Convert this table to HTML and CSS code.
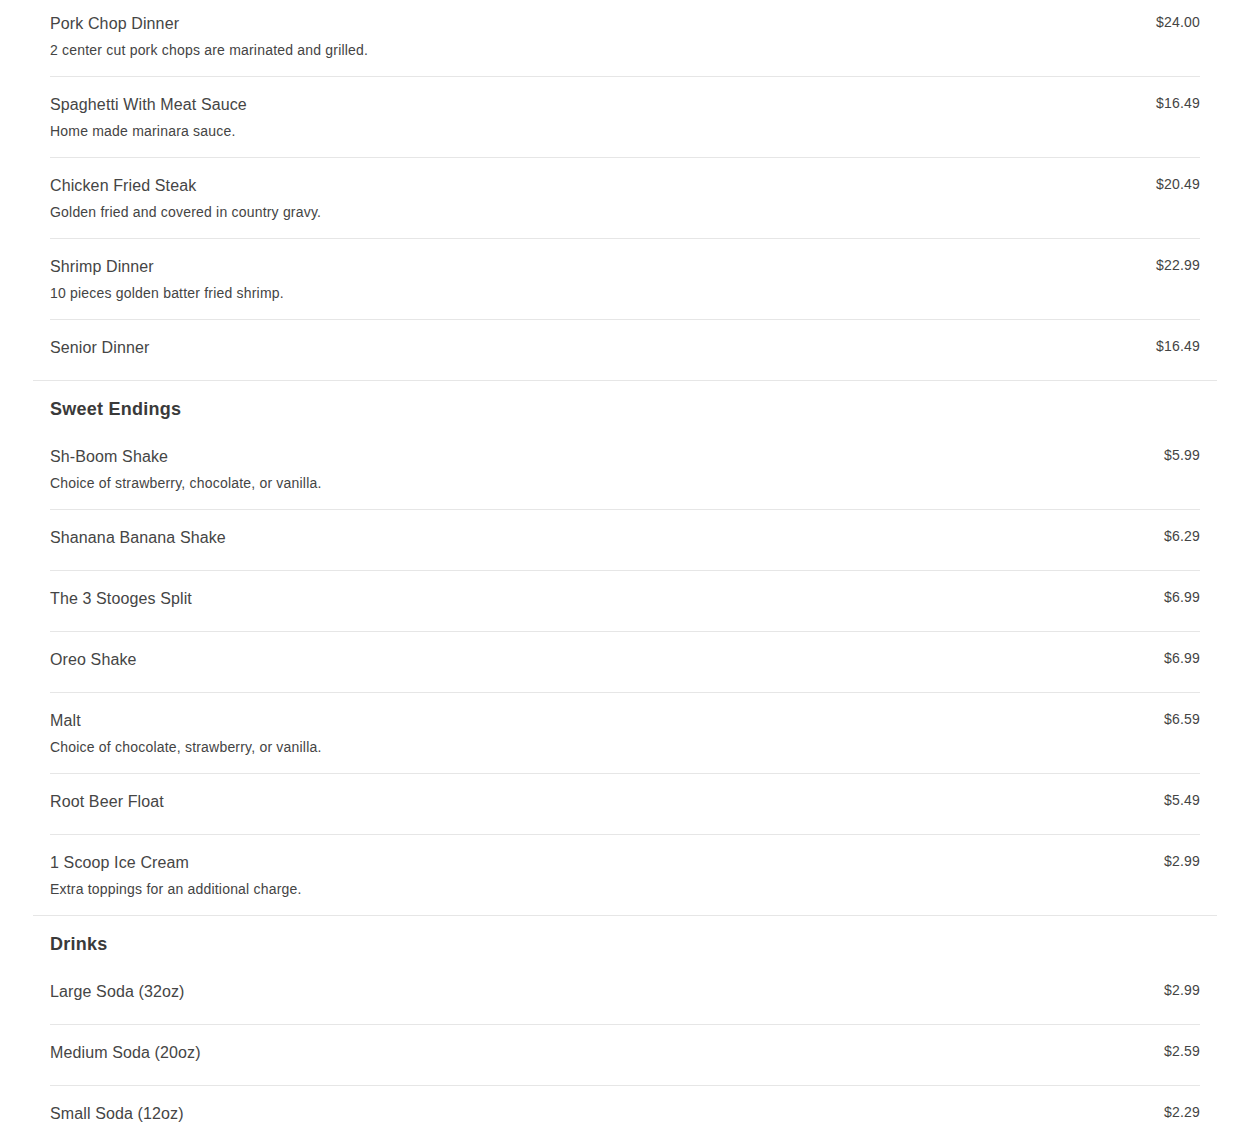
FILE: index.html
```html
<!DOCTYPE html>
<html>
<head>
<meta charset="utf-8">
<link rel="stylesheet" href="styles.css">
</head>
<body>
<div class="menu">
  <section class="section section--first">
    <div class="item">
      <div class="info"><div class="name">Pork Chop Dinner</div><div class="desc">2 center cut pork chops are marinated and grilled.</div></div>
      <div class="price">$24.00</div>
    </div>
    <div class="item">
      <div class="info"><div class="name">Spaghetti With Meat Sauce</div><div class="desc">Home made marinara sauce.</div></div>
      <div class="price">$16.49</div>
    </div>
    <div class="item">
      <div class="info"><div class="name">Chicken Fried Steak</div><div class="desc">Golden fried and covered in country gravy.</div></div>
      <div class="price">$20.49</div>
    </div>
    <div class="item">
      <div class="info"><div class="name">Shrimp Dinner</div><div class="desc">10 pieces golden batter fried shrimp.</div></div>
      <div class="price">$22.99</div>
    </div>
    <div class="item item--plain">
      <div class="info"><div class="name">Senior Dinner</div></div>
      <div class="price">$16.49</div>
    </div>
  </section>
  <section class="section">
    <h2 class="heading">Sweet Endings</h2>
    <div class="item">
      <div class="info"><div class="name">Sh-Boom Shake</div><div class="desc">Choice of strawberry, chocolate, or vanilla.</div></div>
      <div class="price">$5.99</div>
    </div>
    <div class="item item--plain">
      <div class="info"><div class="name">Shanana Banana Shake</div></div>
      <div class="price">$6.29</div>
    </div>
    <div class="item item--plain">
      <div class="info"><div class="name">The 3 Stooges Split</div></div>
      <div class="price">$6.99</div>
    </div>
    <div class="item item--plain">
      <div class="info"><div class="name">Oreo Shake</div></div>
      <div class="price">$6.99</div>
    </div>
    <div class="item">
      <div class="info"><div class="name">Malt</div><div class="desc">Choice of chocolate, strawberry, or vanilla.</div></div>
      <div class="price">$6.59</div>
    </div>
    <div class="item item--plain">
      <div class="info"><div class="name">Root Beer Float</div></div>
      <div class="price">$5.49</div>
    </div>
    <div class="item">
      <div class="info"><div class="name">1 Scoop Ice Cream</div><div class="desc">Extra toppings for an additional charge.</div></div>
      <div class="price">$2.99</div>
    </div>
  </section>
  <section class="section">
    <h2 class="heading">Drinks</h2>
    <div class="item item--plain">
      <div class="info"><div class="name">Large Soda (32oz)</div></div>
      <div class="price">$2.99</div>
    </div>
    <div class="item item--plain">
      <div class="info"><div class="name">Medium Soda (20oz)</div></div>
      <div class="price">$2.59</div>
    </div>
    <div class="item item--plain">
      <div class="info"><div class="name">Small Soda (12oz)</div></div>
      <div class="price">$2.29</div>
    </div>
  </section>
</div>
</body>
</html>
```
FILE: styles.css
```css
html, body {
  margin: 0;
  padding: 0;
  background: #fff;
}
body {
  font-family: "Liberation Sans", Arial, sans-serif;
  color: #444;
}
.menu {
  padding: 0 33px;
}
.section {
  padding: 0 17px;
  border-bottom: 1px solid #e6e6e6;
}
.heading {
  margin: 0;
  padding: 17px 0 9px;
  font-size: 18px;
  line-height: 22px;
  font-weight: bold;
  letter-spacing: 0.25px;
  color: #3a3a3a;
}
.item {
  display: flex;
  justify-content: space-between;
  align-items: flex-start;
  padding: 16px 0 16px;
  border-bottom: 1px solid #e6e6e6;
}
.item:last-child {
  border-bottom: none;
}
.item--plain {
  padding-bottom: 20px;
}
.section--first .item:first-child {
  padding-top: 12px;
}
.name {
  font-size: 16px;
  line-height: 24px;
  letter-spacing: 0.12px;
  color: #454545;
}
.desc {
  margin-top: 4px;
  font-size: 14px;
  line-height: 20px;
  letter-spacing: 0.2px;
  color: #444;
}
.price {
  font-size: 14px;
  line-height: 20px;
  letter-spacing: 0.2px;
  color: #444;
  text-align: right;
}
```
